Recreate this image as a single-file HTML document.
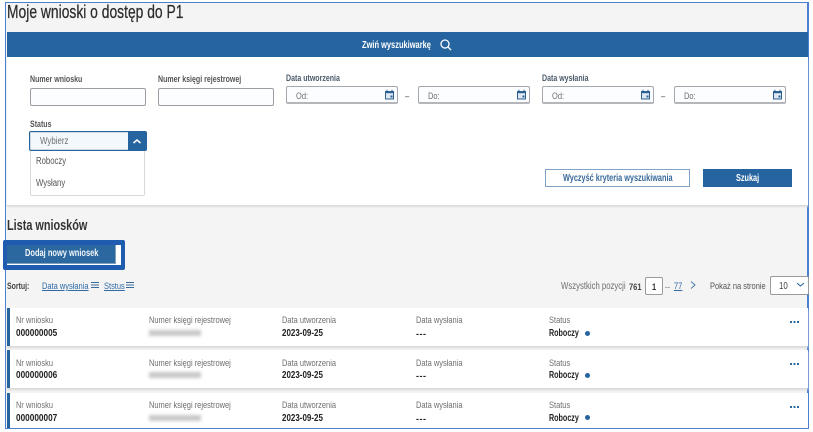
<!DOCTYPE html>
<html lang="pl"><head><meta charset="utf-8"><title>Moje wnioski</title>
<style>
html,body{margin:0;padding:0;background:#fff}
#p{position:relative;width:813px;height:432px;overflow:hidden;background:#fff;font-family:"Liberation Sans",sans-serif;filter:blur(.3px)}
#p div,#p svg{position:absolute}
.t{white-space:nowrap;transform:scaleX(.8);transform-origin:0 50%;line-height:12px;color:#444;font-size:9.35px;margin-top:1px}
.n{transform:scaleX(.74);font-weight:bold}
.l{transform:scaleX(.74);font-weight:bold;color:#555;font-size:9.5px}
.g{color:#6f6f6f}
.b{font-weight:bold;color:#222}
.i{background:#fcfdfe;border:1px solid #9a9ea3;border-radius:2px;box-sizing:border-box}
.d{background:#fcfdfe;border:1px solid #a4a7ab;border-bottom:2px solid #b4b6b9;border-radius:2px;box-sizing:border-box;width:112px;height:18px;top:86px}
.c{background:#fff;left:7px;width:801px;border-left:3px solid #26649f;box-sizing:border-box}
.a{color:#2f6aa3;text-decoration:underline}
.r{transform:scaleX(.74);font-size:9.7px;font-weight:bold;color:#222}
.m{transform:none;font-size:9px;font-weight:bold;letter-spacing:.5px;color:#222}
</style></head><body><div id="p">
<div style="left:5px;top:2px;width:804px;height:427px;box-sizing:border-box;border:1px solid #4d7fd0;border-right-width:2px;background:#f4f4f4"></div>
<div class="t" style="left:7px;top:2px;margin-top:0;font-size:18px;line-height:20px;color:#2b2b2b;transform:scaleX(.77);-webkit-text-stroke:.25px #2b2b2b">Moje wnioski o dostęp do P1</div>
<div style="left:7px;top:32px;width:801px;height:25px;background:#26649f"></div>
<div style="left:7px;top:57px;width:801px;height:148px;background:#fff;box-shadow:0 2px 1px #dcdcdc"></div>
<div class="t n" style="left:362px;top:39px;color:#fff;font-size:10.1px">Zwiń wyszukiwarkę</div>
<svg style="left:439px;top:38px" width="13" height="13" viewBox="0 0 13 13" fill="none" stroke="#fff" stroke-width="1.3"><circle cx="6" cy="6" r="4"/><path d="M9 9l3 3"/></svg>

<div class="t l" style="left:30px;top:73px">Numer wniosku</div>
<div class="i" style="left:30px;top:88px;width:116px;height:18px"></div>
<div class="t l" style="left:158px;top:73px">Numer księgi rejestrowej</div>
<div class="i" style="left:158px;top:88px;width:116px;height:18px"></div>
<div class="t l" style="left:286px;top:72px;color:#4a5a6a">Data utworzenia</div>
<div class="d" style="left:286px"></div>
<div class="t g" style="left:296px;top:89px">Od:</div>
<div class="t" style="left:405px;top:89px">–</div>
<div class="d" style="left:418px"></div>
<div class="t g" style="left:428px;top:89px">Do:</div>
<div class="t l" style="left:542px;top:72px;color:#4a5a6a">Data wysłania</div>
<div class="d" style="left:542px"></div>
<div class="t g" style="left:552px;top:89px">Od:</div>
<div class="t" style="left:661px;top:89px">–</div>
<div class="d" style="left:674px"></div>
<div class="t g" style="left:684px;top:89px">Do:</div>
<svg style="left:384px;top:89px" width="11" height="11" viewBox="0 0 11 11"><path d="M1.5 2.5h8v7.5h-8z" fill="#dfe8f2" stroke="#2c5f92" stroke-width="1"/><path d="M1 2h9v2.2H1z" fill="#2c5f92"/><path d="M3 .8v2M8 .8v2" stroke="#2c5f92"/><rect x="6.5" y="6.5" width="2" height="2" fill="#2c5f92"/></svg>
<svg style="left:516px;top:89px" width="11" height="11" viewBox="0 0 11 11"><path d="M1.5 2.5h8v7.5h-8z" fill="#dfe8f2" stroke="#2c5f92" stroke-width="1"/><path d="M1 2h9v2.2H1z" fill="#2c5f92"/><path d="M3 .8v2M8 .8v2" stroke="#2c5f92"/><rect x="6.5" y="6.5" width="2" height="2" fill="#2c5f92"/></svg>
<svg style="left:640px;top:89px" width="11" height="11" viewBox="0 0 11 11"><path d="M1.5 2.5h8v7.5h-8z" fill="#dfe8f2" stroke="#2c5f92" stroke-width="1"/><path d="M1 2h9v2.2H1z" fill="#2c5f92"/><path d="M3 .8v2M8 .8v2" stroke="#2c5f92"/><rect x="6.5" y="6.5" width="2" height="2" fill="#2c5f92"/></svg>
<svg style="left:772px;top:89px" width="11" height="11" viewBox="0 0 11 11"><path d="M1.5 2.5h8v7.5h-8z" fill="#dfe8f2" stroke="#2c5f92" stroke-width="1"/><path d="M1 2h9v2.2H1z" fill="#2c5f92"/><path d="M3 .8v2M8 .8v2" stroke="#2c5f92"/><rect x="6.5" y="6.5" width="2" height="2" fill="#2c5f92"/></svg>

<div class="t l" style="left:30px;top:118px">Status</div>
<div style="left:30px;top:151px;width:115px;height:45px;background:#fff;border:1px solid #dadada;border-top:0;border-radius:0 0 2px 2px;box-sizing:border-box"></div>
<div style="left:29px;top:131px;width:118px;height:20px;box-sizing:border-box;border:1px solid #26649f;border-radius:2px;background:#f3f8fc;box-shadow:inset 0 0 0 1px #cfd8e0"></div>
<div style="left:128px;top:132px;width:18px;height:18px;background:#26649f"></div>
<svg style="left:132px;top:138px" width="10" height="7" viewBox="0 0 10 7" fill="none" stroke="#fff" stroke-width="1.6"><path d="M1.5 5L5 2l3.5 3"/></svg>
<div class="t g" style="left:40px;top:135px;font-size:9.9px">Wybierz</div>
<div class="t" style="left:36px;top:155px;font-size:9.7px;color:#555">Roboczy</div>
<div class="t" style="left:36px;top:177px;font-size:9.7px;color:#555">Wysłany</div>

<div style="left:545px;top:169px;width:145px;height:18px;box-sizing:border-box;border:1px solid #7fa3c6;background:#fff"></div>
<div class="t n" style="left:563px;top:172px;color:#3a6a9a;font-size:9.9px">Wyczyść kryteria wyszukiwania</div>
<div style="left:703px;top:169px;width:89px;height:18px;background:#26649f"></div>
<div class="t n" style="left:736px;top:172px;color:#fff;font-size:9.9px">Szukaj</div>

<div class="t n" style="left:7px;top:218px;margin-top:0;font-size:14.7px;line-height:16px;color:#333">Lista wniosków</div>
<div style="left:3px;top:240px;width:122px;height:30px;box-sizing:border-box;border:solid #1f5cb0;border-width:5px 4px 5px;border-radius:2px;background:#fff"></div>
<div style="left:7px;top:245px;width:109px;height:19px;box-sizing:border-box;background:#2a689f;border-right:1px solid #7fa0bf;border-bottom:1px solid #7fa0bf"></div>
<div class="t n" style="left:25px;top:248px;margin-top:0;color:#f2f6fa;font-size:10.1px">Dodaj nowy wniosek</div>

<div class="t n" style="left:7px;top:279px;color:#444;font-size:9.4px">Sortuj:</div>
<div class="t a" style="left:42px;top:279px">Data wysłania</div>
<svg style="left:90px;top:281px" width="10" height="8" viewBox="0 0 10 8" stroke="#3a6a9a"><path d="M1 1.5h8M1 4h8M1 6.5h8"/></svg>
<div class="t a" style="left:104px;top:279px">Ststus</div>
<svg style="left:125px;top:281px" width="10" height="8" viewBox="0 0 10 8" stroke="#3a6a9a"><path d="M1 1.5h8M1 4h8M1 6.5h8"/></svg>

<div class="t g" style="left:561px;top:280px;font-size:9.7px">Wszystkich pozycji</div>
<div class="t" style="left:629px;top:280px;font-weight:bold;color:#444">761</div>
<div style="left:645px;top:277px;width:18px;height:18px;box-sizing:border-box;border:1px solid #9a9a9a;border-radius:2px;background:#fff"></div>
<div class="t" style="left:652px;top:280px;font-weight:bold;color:#333">1</div>
<div class="t g" style="left:665px;top:280px">--</div>
<div class="t a" style="left:674px;top:279px">77</div>
<svg style="left:689px;top:280px" width="8" height="10" viewBox="0 0 8 10" fill="none" stroke="#4a7aa8" stroke-width="1"><path d="M2 1.5L6 5 2 8.5"/></svg>
<div class="t" style="left:710px;top:279px;color:#555;font-size:9.35px">Pokaż na stronie</div>
<div style="left:770px;top:276px;width:39px;height:19px;box-sizing:border-box;border:1px solid #9a9a9a;border-radius:2px;background:#fff"></div>
<div class="t" style="left:779px;top:280px;color:#444;font-size:9.9px">10</div>
<svg style="left:796px;top:282px" width="9" height="6" viewBox="0 0 9 6" fill="none" stroke="#2f6aa3" stroke-width="1.1"><path d="M1 1l3.5 3L8 1"/></svg>

<div class="c" style="top:308px;height:38px;box-shadow:0 2px 2px #d8d8d8"></div>
<div class="c" style="top:350px;height:38px;box-shadow:0 2px 2px #d8d8d8"></div>
<div class="c" style="top:393px;height:35px"></div>

<div class="t g" style="left:16px;top:313px">Nr wniosku</div><div class="t b" style="left:16px;top:327px;font-size:10.3px">000000005</div>
<div class="t g" style="left:149px;top:313px">Numer księgi rejestrowej</div><div style="left:149px;top:330px;width:52px;height:6px;background:#c8c8c8;filter:blur(1.5px)"></div>
<div class="t g" style="left:282px;top:313px">Data utworzenia</div><div class="t b" style="left:282px;top:327px;font-size:10px">2023-09-25</div>
<div class="t g" style="left:416px;top:313px">Data wysłania</div><div class="t m" style="left:416px;top:327px">---</div>
<div class="t g" style="left:549px;top:313px">Status</div><div class="t r" style="left:549px;top:327px">Roboczy</div>
<div style="left:585px;top:331px;width:5px;height:5px;border-radius:50%;background:#26649f"></div>
<div style="left:790px;top:321px;width:2px;height:2px;background:#2f6aa3;box-shadow:3.5px 0 #2f6aa3,7px 0 #2f6aa3"></div>

<div class="t g" style="left:16px;top:356px">Nr wniosku</div><div class="t b" style="left:16px;top:369px;font-size:10.3px">000000006</div>
<div class="t g" style="left:149px;top:356px">Numer księgi rejestrowej</div><div style="left:149px;top:372px;width:52px;height:6px;background:#c8c8c8;filter:blur(1.5px)"></div>
<div class="t g" style="left:282px;top:356px">Data utworzenia</div><div class="t b" style="left:282px;top:369px;font-size:10px">2023-09-25</div>
<div class="t g" style="left:416px;top:356px">Data wysłania</div><div class="t m" style="left:416px;top:369px">---</div>
<div class="t g" style="left:549px;top:356px">Status</div><div class="t r" style="left:549px;top:369px">Roboczy</div>
<div style="left:585px;top:373px;width:5px;height:5px;border-radius:50%;background:#26649f"></div>
<div style="left:790px;top:363px;width:2px;height:2px;background:#2f6aa3;box-shadow:3.5px 0 #2f6aa3,7px 0 #2f6aa3"></div>

<div class="t g" style="left:16px;top:398px">Nr wniosku</div><div class="t b" style="left:16px;top:412px;font-size:10.3px">000000007</div>
<div class="t g" style="left:149px;top:398px">Numer księgi rejestrowej</div><div style="left:149px;top:415px;width:52px;height:6px;background:#c8c8c8;filter:blur(1.5px)"></div>
<div class="t g" style="left:282px;top:398px">Data utworzenia</div><div class="t b" style="left:282px;top:412px;font-size:10px">2023-09-25</div>
<div class="t g" style="left:416px;top:398px">Data wysłania</div><div class="t m" style="left:416px;top:412px">---</div>
<div class="t g" style="left:549px;top:398px">Status</div><div class="t r" style="left:549px;top:412px">Roboczy</div>
<div style="left:585px;top:415px;width:5px;height:5px;border-radius:50%;background:#26649f"></div>
<div style="left:790px;top:406px;width:2px;height:2px;background:#2f6aa3;box-shadow:3.5px 0 #2f6aa3,7px 0 #2f6aa3"></div>

<div style="left:5px;top:428px;width:804px;height:1px;background:#4d7fd0"></div>
</div></body></html>
